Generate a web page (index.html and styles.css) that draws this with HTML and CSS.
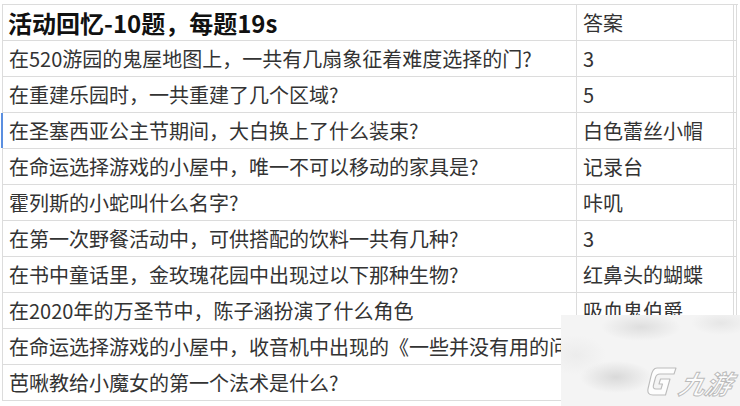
FILE: index.html
```html
<!DOCTYPE html>
<html lang="zh-CN">
<head>
<meta charset="utf-8">
<link rel="stylesheet" href="styles.css">
</head>
<body>
<div class="sheet">
  <div class="row head">
    <div class="cell q">活动回忆-10题，每题19s</div>
    <div class="cell a">答案</div>
    <div class="cell c"></div>
  </div>
  <div class="row">
    <div class="cell q">在520游园的鬼屋地图上，一共有几扇象征着难度选择的门?</div>
    <div class="cell a">3</div>
    <div class="cell c"></div>
  </div>
  <div class="row">
    <div class="cell q">在重建乐园时，一共重建了几个区域?</div>
    <div class="cell a">5</div>
    <div class="cell c"></div>
  </div>
  <div class="row">
    <div class="cell q selected">在圣塞西亚公主节期间，大白换上了什么装束?</div>
    <div class="cell a">白色蕾丝小帽</div>
    <div class="cell c"></div>
  </div>
  <div class="row">
    <div class="cell q">在命运选择游戏的小屋中，唯一不可以移动的家具是?</div>
    <div class="cell a">记录台</div>
    <div class="cell c"></div>
  </div>
  <div class="row">
    <div class="cell q">霍列斯的小蛇叫什么名字?</div>
    <div class="cell a">咔叽</div>
    <div class="cell c"></div>
  </div>
  <div class="row">
    <div class="cell q">在第一次野餐活动中，可供搭配的饮料一共有几种?</div>
    <div class="cell a">3</div>
    <div class="cell c"></div>
  </div>
  <div class="row">
    <div class="cell q">在书中童话里，金玫瑰花园中出现过以下那种生物?</div>
    <div class="cell a">红鼻头的蝴蝶</div>
    <div class="cell c"></div>
  </div>
  <div class="row">
    <div class="cell q">在2020年的万圣节中，陈子涵扮演了什么角色</div>
    <div class="cell a">吸血鬼伯爵</div>
    <div class="cell c"></div>
  </div>
  <div class="row">
    <div class="cell q overflow">在命运选择游戏的小屋中，收音机中出现的《一些并没有用的问题》</div>
    <div class="cell a blank"></div>
    <div class="cell c"></div>
  </div>
  <div class="row">
    <div class="cell q">芭啾教给小魔女的第一个法术是什么?</div>
    <div class="cell a"></div>
    <div class="cell c"></div>
  </div>
</div>
<div class="watermark">
  <svg class="wm-icon" viewBox="0 0 30 32" width="30" height="32">
    <path d="M10 2 L29 2 L27 8 L13 8 Q9.5 8 8.5 11.5 L6.5 19 Q5.5 23 9 23 L14 23 L15.5 18 L12 18 L13.5 13 L23 13 L18.5 29 L6 29 Q-0.5 29 1.2 22 L3.8 11 Q5.5 2 10 2 Z" fill="#fdfdfd" stroke="#bcbcbc" stroke-width="1.1" stroke-linejoin="round"/>
  </svg>
  <span class="wm-text">九游</span>
</div>
</body>
</html>
```
FILE: styles.css
```css
html, body {
  margin: 0;
  padding: 0;
  background: #ffffff;
  width: 740px;
  height: 406px;
  overflow: hidden;
}

body {
  font-family: "Noto Sans CJK SC", "Noto Sans", sans-serif;
  color: #333333;
  position: relative;
}

.sheet {
  margin: 4px 0 0 2px;
  border-top: 1px solid #dcdcdc;
  border-left: 1px solid #dcdcdc;
  width: 735px;
}

.row {
  display: flex;
  height: 36px;
}

.cell {
  box-sizing: border-box;
  height: 36px;
  border-bottom: 1px solid #dcdcdc;
  border-right: 1px solid #dcdcdc;
  display: flex;
  align-items: center;
  white-space: nowrap;
  font-size: 20px;
  line-height: 1;
  position: relative;
}

.q {
  width: 574px;
  padding-left: 6px;
}

.a {
  width: 157px;
  padding-left: 6px;
  overflow: hidden;
}

.c {
  width: 3px;
}

.head .cell.q {
  font-size: 24px;
  font-weight: bold;
  color: #111111;
  padding-left: 5px;
}

.head .cell.a {
  color: #333333;
}

.selected::before {
  content: "";
  position: absolute;
  left: -2px;
  top: 0;
  bottom: 0;
  width: 2px;
  background: #5b8fe0;
}

.overflow {
  border-right-color: transparent;
  overflow: visible;
  z-index: 1;
}

.watermark {
  position: absolute;
  left: 561px;
  top: 315px;
  width: 179px;
  height: 91px;
  z-index: 5;
  background:
    radial-gradient(ellipse 40px 14px at 80px 12px, #dedede 0%, rgba(222,222,222,0) 100%),
    radial-gradient(ellipse 30px 12px at 160px 8px, #e6e6e6 0%, rgba(230,230,230,0) 100%),
    radial-gradient(ellipse 36px 16px at 55px 62px, #d9d9d9 0%, rgba(217,217,217,0) 100%),
    radial-gradient(ellipse 30px 20px at 15px 40px, #ececec 0%, rgba(236,236,236,0) 100%),
    #f4f4f4;
  display: flex;
  align-items: flex-end;
  justify-content: flex-end;
  padding: 0 8px 8px 0;
  box-sizing: border-box;
  gap: 3px;
}

.wm-icon {
  display: block;
}

.wm-text {
  font-family: "Noto Sans CJK SC", sans-serif;
  font-size: 26px;
  font-weight: bold;
  font-style: italic;
  line-height: 31px;
  color: #fdfdfd;
  -webkit-text-stroke: 1px #bcbcbc;
  display: inline-block;
  transform: skewX(-14deg);
}
```
